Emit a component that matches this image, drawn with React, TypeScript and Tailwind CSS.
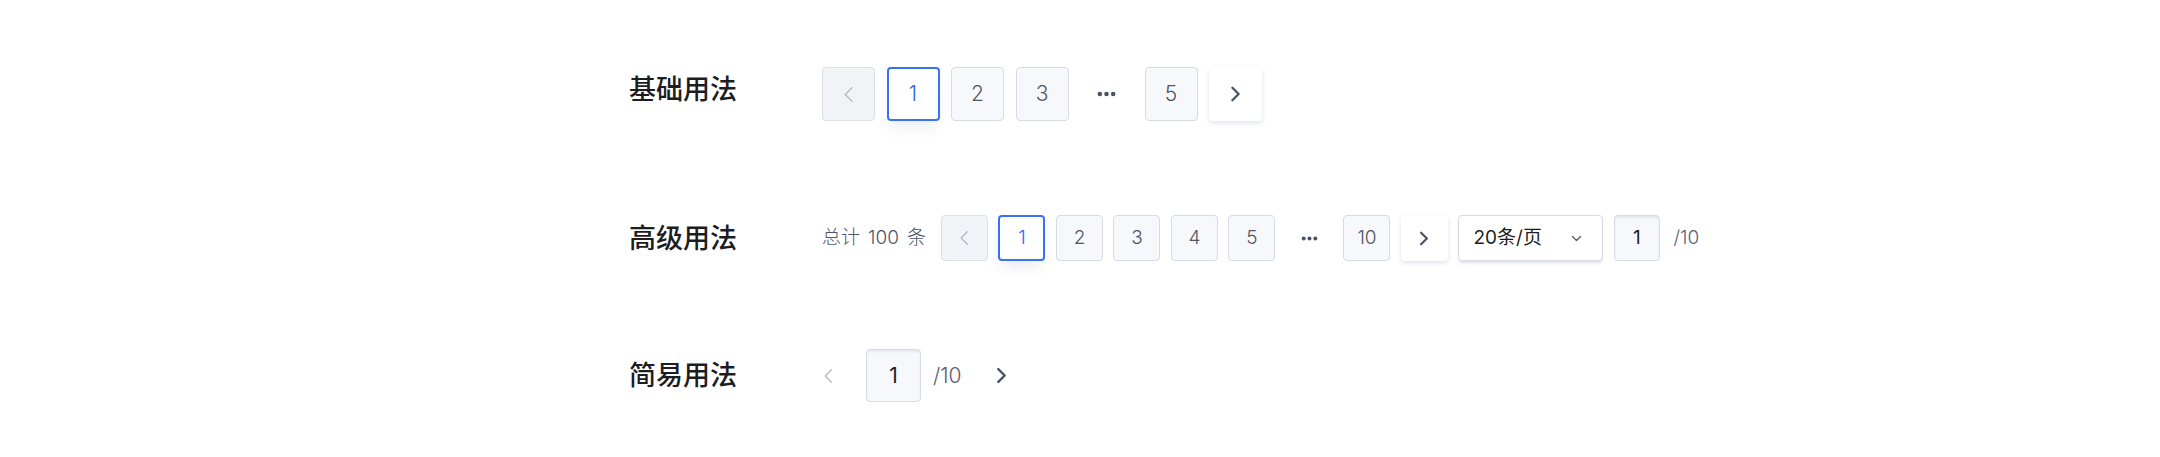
import React from "react";

const font = { fontFamily: '"Inter", "Noto Sans CJK SC", sans-serif' };

function ChevronLeft({ className, width = 1.6 }: { className?: string; width?: number }) {
  return (
    <svg className={className} viewBox="0 0 12 18" fill="none" stroke="currentColor" strokeWidth={width} strokeLinecap="round" strokeLinejoin="round">
      <path d="M10 1.5 L2.5 9 L10 16.5" />
    </svg>
  );
}

function ChevronRight({ className }: { className?: string }) {
  return (
    <svg className={className} viewBox="0 0 12 18" fill="none" stroke="currentColor" strokeWidth={2.6} strokeLinecap="round" strokeLinejoin="round">
      <path d="M2.5 2 L9.5 9 L2.5 16" />
    </svg>
  );
}

function Dots({ className }: { className?: string }) {
  return (
    <svg className={className} viewBox="0 0 20 6" fill="currentColor">
      <circle cx="3" cy="3" r="2.4" />
      <circle cx="10" cy="3" r="2.4" />
      <circle cx="17" cy="3" r="2.4" />
    </svg>
  );
}

export default function App() {
  const box = "flex items-center justify-center rounded-[4px] border-[1.5px] border-[#d7dae7] bg-[#f7f8fb] text-[#4e5566] font-light";
  const active = "flex items-center justify-center rounded-[4px] border-2 border-[#3a6ff7] bg-white text-[#2e66f5] font-light shadow-[0_10px_14px_-4px_rgba(60,70,110,0.10)]";
  const disabled = "flex items-center justify-center rounded-[4px] border-[1.5px] border-[#dcdee8] bg-[#f2f3f6] text-[#b2b6c3]";
  const next = "flex items-center justify-center rounded-[4px] bg-white text-[#4a5263] shadow-[0_2px_5px_rgba(70,80,130,0.16)]";

  return (
    <div className="w-full h-[457px] bg-white pl-[629px] pt-[67px]" style={font}>
      {/* 基础用法 */}
      <div className="flex items-center">
        <div className="w-[193px] mb-[10px] text-[27px] font-medium text-[#1d1d1f] leading-none">基础用法</div>
        <div className="flex items-center gap-[11.5px] text-[21px]">
          <button className={`${disabled} w-[53px] h-[54px]`}>
            <ChevronLeft className="w-[11px] h-[17px]" width={1.5} />
          </button>
          <button className={`${active} w-[53px] h-[54px]`}>1</button>
          <button className={`${box} w-[53px] h-[54px]`}>2</button>
          <button className={`${box} w-[53px] h-[54px]`}>3</button>
          <span className="flex items-center justify-center w-[53px] h-[54px] text-[#4a5263]">
            <Dots className="w-[19px] h-[6px]" />
          </span>
          <button className={`${box} w-[53px] h-[54px]`}>5</button>
          <button className={`${next} w-[53px] h-[54px]`}>
            <ChevronRight className="w-[11px] h-[16px]" />
          </button>
        </div>
      </div>

      {/* 高级用法 */}
      <div className="flex items-center mt-[94px]">
        <div className="w-[193px] text-[27px] font-medium text-[#1d1d1f] leading-none">高级用法</div>
        <div className="flex items-center text-[19px]">
          <span className="flex items-center text-[#4e5566] font-light mr-[15px]">
            <span>总计</span>
            <span className="mx-[8px]">100</span>
            <span>条</span>
          </span>
          <div className="flex items-center gap-[10.5px]">
            <button className={`${disabled} w-[47px] h-[46px]`}>
              <ChevronLeft className="w-[10px] h-[16px]" width={1.5} />
            </button>
            <button className={`${active} w-[47px] h-[46px]`}>1</button>
            <button className={`${box} w-[47px] h-[46px]`}>2</button>
            <button className={`${box} w-[47px] h-[46px]`}>3</button>
            <button className={`${box} w-[47px] h-[46px]`}>4</button>
            <button className={`${box} w-[47px] h-[46px]`}>5</button>
            <span className="flex items-center justify-center w-[47px] h-[46px] text-[#4a5263]">
              <Dots className="w-[17px] h-[5px]" />
            </span>
            <button className={`${box} w-[47px] h-[46px]`}>10</button>
            <button className={`${next} w-[47px] h-[46px]`}>
              <ChevronRight className="w-[10px] h-[15px]" />
            </button>
            <button className="flex items-center justify-between w-[145px] h-[46px] pl-[14px] pr-[20px] rounded-[4px] border-[1.5px] border-[#d7dae7] bg-white text-[#1d1d1f] shadow-[0_3px_3px_-1px_rgba(90,100,160,0.22)]">
              <span>20条/页</span>
              <svg className="w-[11px] h-[7px] text-[#5a6072]" viewBox="0 0 11 7" fill="none" stroke="currentColor" strokeWidth={1.4} strokeLinecap="round" strokeLinejoin="round">
                <path d="M1.5 1.5 L5.5 5.5 L9.5 1.5" />
              </svg>
            </button>
            <div className="flex items-center justify-center w-[46px] h-[46px] rounded-[4px] border-[1.5px] border-[#d7dae7] bg-[#f7f8fb] text-[#1d1d1f] shadow-[inset_0_2px_2px_rgba(80,90,140,0.10)]">
              1
            </div>
            <span className="ml-[3px] text-[#5a6072] font-light">/10</span>
          </div>
        </div>
      </div>

      {/* 简易用法 */}
      <div className="flex items-center mt-[88px]">
        <div className="w-[193px] text-[27px] font-medium text-[#1d1d1f] leading-none">简易用法</div>
        <div className="flex items-center text-[21px]">
          <button className="flex items-center justify-center w-[12px] h-[18px] text-[#b2b6c3]">
            <ChevronLeft className="w-[10px] h-[16px]" width={1.5} />
          </button>
          <div className="ml-[32px] flex items-center justify-center w-[55px] h-[53px] rounded-[4px] border-[1.5px] border-[#d7dae7] bg-[#f7f8fb] text-[#1d1d1f] shadow-[inset_0_2px_2px_rgba(80,90,140,0.10)]">
            1
          </div>
          <span className="ml-[12px] text-[#5a6072] font-light">/10</span>
          <button className="ml-[34px] flex items-center justify-center w-[12px] h-[18px] text-[#4a5263]">
            <ChevronRight className="w-[11px] h-[17px]" />
          </button>
        </div>
      </div>
    </div>
  );
}
